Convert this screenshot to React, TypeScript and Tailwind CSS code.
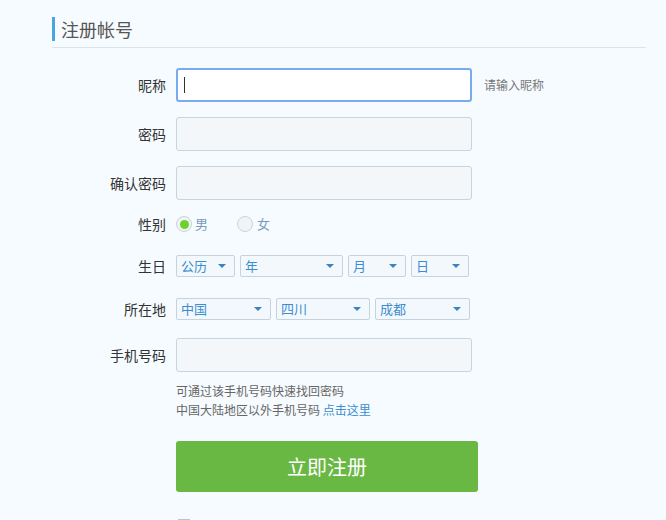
const font = { fontFamily: '"Noto Sans CJK SC", "Noto Sans", sans-serif' };

const Label = ({ text }: { text: string }) => (
  <div className="w-[114px] shrink-0 pr-0 text-right text-[14px] text-[#333]">{text}</div>
);

const Select = ({ value, w }: { value: string; w: string }) => (
  <div
    className={`${w} h-[22px] flex items-center justify-between rounded-[2px] border border-[#c5d3de] bg-[#f3f8fc] pl-[4px] pr-[8px] text-[13px] text-[#3b8dd0]`}
  >
    <span>{value}</span>
    <svg width="8" height="4" viewBox="0 0 8 4">
      <path d="M0 0 L8 0 L4 4 Z" fill="#3b82c4" />
    </svg>
  </div>
);

const TextInput = ({ focus }: { focus?: boolean }) =>
  focus ? (
    <div className="w-[296px] h-[34px] flex items-center rounded-[3px] border-2 border-[#7aaaf2] bg-white pl-[6px]">
      <div className="w-px h-[16px] bg-[#333]" />
    </div>
  ) : (
    <div className="w-[296px] h-[34px] rounded-[3px] border border-[#c8d4de] bg-[#f3f7fa]" />
  );

export default function App() {
  return (
    <div style={font} className="min-h-[520px] bg-[#f6fbff] pl-[52px] pr-[20px] pt-[17px] overflow-hidden h-[520px]">
      <div className="border-b border-[#dde2e6] pb-[6px]">
        <div className="flex items-center h-[24px]">
          <div className="w-[3px] h-[24px] bg-[#4aa5e0]" />
          <span className="ml-[6px] text-[18px] text-[#555]">注册帐号</span>
        </div>
      </div>

      <div className="mt-[20px] flex items-center gap-[10px]">
        <Label text="昵称" />
        <TextInput focus />
        <span className="ml-[2px] text-[12px] text-[#777]">请输入昵称</span>
      </div>

      <div className="mt-[15px] flex items-center gap-[10px]">
        <Label text="密码" />
        <TextInput />
      </div>

      <div className="mt-[15px] flex items-center gap-[10px]">
        <Label text="确认密码" />
        <TextInput />
      </div>

      <div className="mt-[14px] h-[20px] flex items-center gap-[10px]">
        <Label text="性别" />
        <div className="flex items-center text-[13px] text-[#7a9bb8]">
          <div className="w-[16px] h-[16px] rounded-full border border-[#c9d3db] bg-[#f0f4f7] flex items-center justify-center">
            <div className="w-[9px] h-[9px] rounded-full bg-[#6fd02c]" />
          </div>
          <span className="ml-[3px]">男</span>
          <div className="ml-[29px] w-[16px] h-[16px] rounded-full border border-[#c9d3db] bg-[#f0f4f7]" />
          <span className="ml-[4px]">女</span>
        </div>
      </div>

      <div className="mt-[21px] flex items-center gap-[10px]">
        <Label text="生日" />
        <div className="flex gap-[5px]">
          <Select value="公历" w="w-[59px]" />
          <Select value="年" w="w-[103px]" />
          <Select value="月" w="w-[58px]" />
          <Select value="日" w="w-[58px]" />
        </div>
      </div>

      <div className="mt-[21px] flex items-center gap-[10px]">
        <Label text="所在地" />
        <div className="flex gap-[5px]">
          <Select value="中国" w="w-[95px]" />
          <Select value="四川" w="w-[94px]" />
          <Select value="成都" w="w-[95px]" />
        </div>
      </div>

      <div className="mt-[18px] flex items-center gap-[10px]">
        <Label text="手机号码" />
        <TextInput />
      </div>

      <div className="mt-[9px] pl-[124px] text-[12px] leading-[19px] text-[#666]">
        <div>可通过该手机号码快速找回密码</div>
        <div>
          中国大陆地区以外手机号码 <span className="text-[#3b8dd0]">点击这里</span>
        </div>
      </div>

      <div className="mt-[22px] pl-[124px]">
        <button className="w-[302px] h-[51px] rounded-[3px] bg-[#6ab844] text-[20px] text-white">
          立即注册
        </button>
      </div>

      <div className="mt-[27px] pl-[126px]">
        <div className="w-[12px] h-[12px] border border-[#b8c4cc] bg-[#e8eef2]" />
      </div>
    </div>
  );
}
